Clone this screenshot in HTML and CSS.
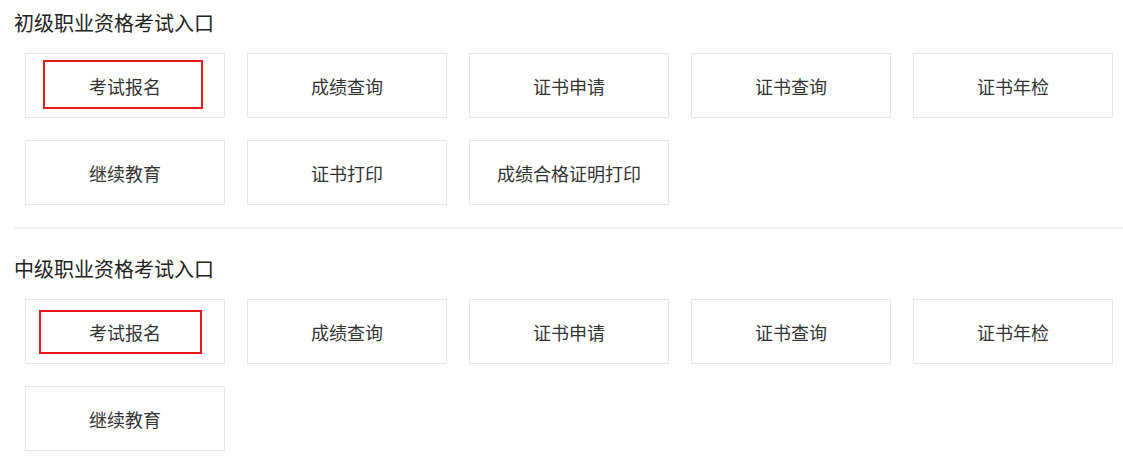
FILE: index.html
```html
<!DOCTYPE html>
<html lang="zh-CN">
<head>
<meta charset="utf-8">
<title>职业资格考试入口</title>
<link rel="stylesheet" href="styles.css">
</head>
<body>
<div class="section">
  <h2 class="title">初级职业资格考试入口</h2>
  <div class="grid">
    <a class="item">考试报名<span class="mark mark-a"></span></a>
    <a class="item">成绩查询</a>
    <a class="item">证书申请</a>
    <a class="item">证书查询</a>
    <a class="item">证书年检</a>
    <a class="item">继续教育</a>
    <a class="item">证书打印</a>
    <a class="item">成绩合格证明打印</a>
  </div>
</div>
<div class="divider"></div>
<div class="section second">
  <h2 class="title">中级职业资格考试入口</h2>
  <div class="grid">
    <a class="item">考试报名<span class="mark mark-b"></span></a>
    <a class="item">成绩查询</a>
    <a class="item">证书申请</a>
    <a class="item">证书查询</a>
    <a class="item">证书年检</a>
    <a class="item">继续教育</a>
  </div>
</div>
</body>
</html>
```
FILE: styles.css
```css
html, body {
  margin: 0;
  padding: 0;
  background: #fff;
}
body {
  font-family: "Microsoft YaHei", "Noto Sans CJK SC", "Noto Sans", sans-serif;
  color: #333;
}
.section {
  padding: 10px 0 22px 14px;
}
.section.second {
  padding-top: 27px;
}
.title {
  margin: 0;
  font-size: 20px;
  line-height: 26px;
  font-weight: normal;
  color: #222;
}
.grid {
  margin-top: 17px;
  padding-left: 11px;
  display: grid;
  grid-template-columns: repeat(5, 200px);
  grid-auto-rows: 65px;
  gap: 22px;
}
.item {
  position: relative;
  box-sizing: border-box;
  border: 1px solid #e6e6e6;
  display: flex;
  align-items: center;
  justify-content: center;
  font-size: 18px;
  color: #333;
  text-decoration: none;
}
.divider {
  margin-left: 14px;
  height: 0;
  border-top: 2px solid #f1f1f1;
}
.mark {
  position: absolute;
  box-sizing: border-box;
  border: 2px solid #e31c1c;
}
.mark-a {
  left: 17px;
  top: 6px;
  width: 160px;
  height: 49px;
}
.mark-b {
  left: 13px;
  top: 10px;
  width: 163px;
  height: 44px;
}
```
